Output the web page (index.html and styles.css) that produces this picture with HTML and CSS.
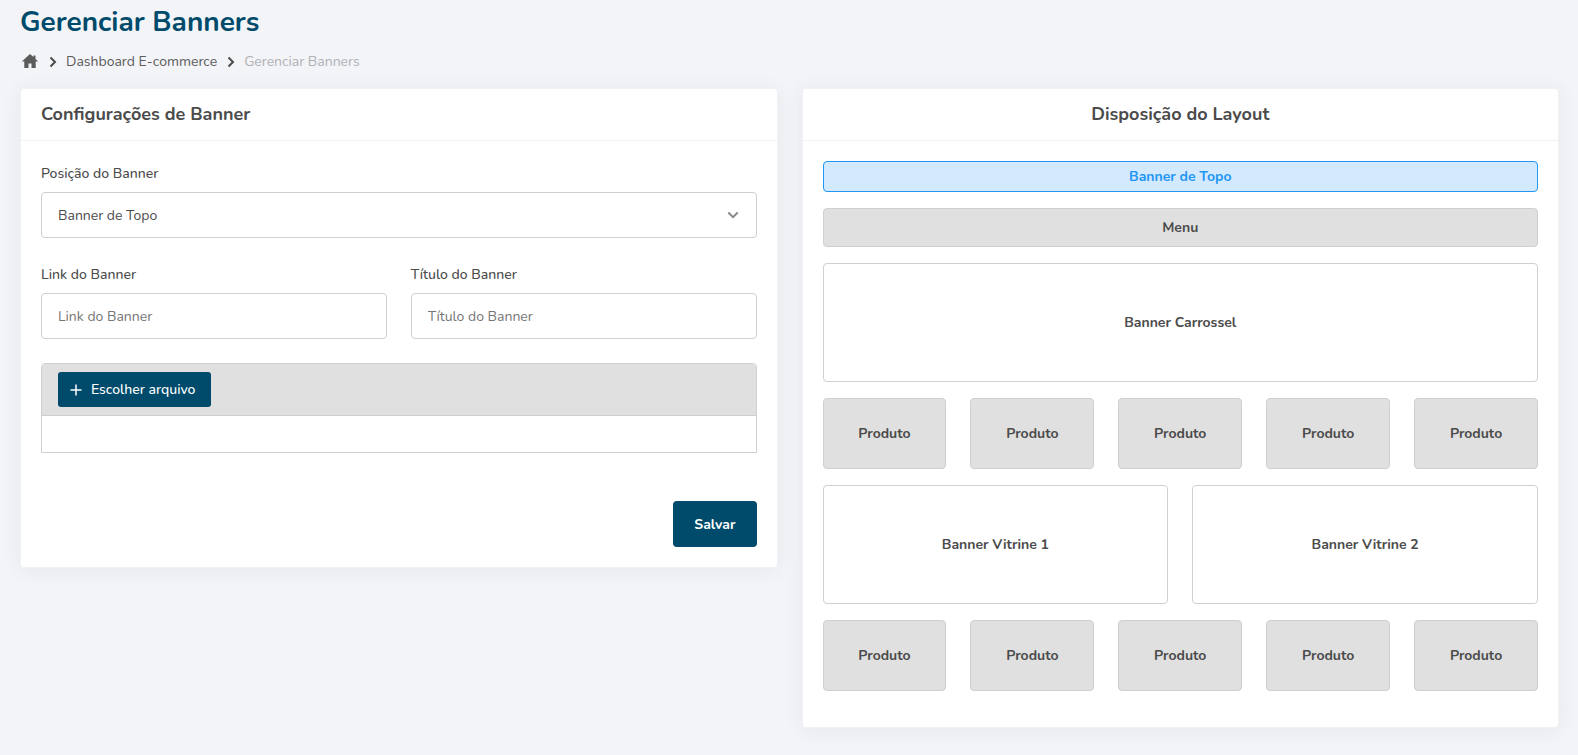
FILE: index.html
```html
<!DOCTYPE html>
<html lang="pt-BR">
<head>
<meta charset="utf-8">
<meta name="viewport" content="width=device-width, initial-scale=1">
<title>Gerenciar Banners</title>
<link rel="stylesheet" href="styles.css">
</head>
<body>
<main class="page">
  <h1 class="page-title">Gerenciar Banners</h1>
  <nav class="breadcrumb" aria-label="Trilha">
    <a class="crumb-home" href="#" aria-label="Início"><svg viewBox="0 0 18 18" width="18" height="18"><path fill="currentColor" d="M9 1 .8 8.500h2.500V15h4.200v-4.500h3V15h4.200V8.500h2.500l-2.700-2.500V2.500h-2v1.600z"/></svg></a>
    <svg class="crumb-sep" viewBox="0 0 8 12" width="8" height="12"><path d="M1.500 1.500 6 6l-4.500 4.500"/></svg>
    <a class="crumb" href="#">Dashboard E-commerce</a>
    <svg class="crumb-sep" viewBox="0 0 8 12" width="8" height="12"><path d="M1.500 1.500 6 6l-4.500 4.500"/></svg>
    <span class="crumb crumb-current" aria-current="page">Gerenciar Banners</span>
  </nav>

  <div class="columns">
    <section class="card">
      <h2 class="card-title">Configurações de Banner</h2>
      <form class="card-body">
        <div class="field">
          <label for="posicao">Posição do Banner</label>
          <div class="select-wrap">
            <select id="posicao" class="control">
              <option>Banner de Topo</option>
              <option>Banner Carrossel</option>
              <option>Banner Vitrine 1</option>
              <option>Banner Vitrine 2</option>
            </select>
            <svg class="select-arrow" viewBox="0 0 12 8" width="12" height="8"><path d="M1.300 1.500 6 6.200l4.700-4.700"/></svg>
          </div>
        </div>
        <div class="field-row">
          <div class="field">
            <label for="link">Link do Banner</label>
            <input id="link" class="control" type="text" placeholder="Link do Banner">
          </div>
          <div class="field">
            <label for="titulo">Título do Banner</label>
            <input id="titulo" class="control" type="text" placeholder="Título do Banner">
          </div>
        </div>
        <div class="upload">
          <div class="upload-bar">
            <button class="btn btn-file" type="button"><svg viewBox="0 0 12 12" width="12" height="12"><path d="M6 .5v11M.5 6h11"/></svg>Escolher arquivo</button>
          </div>
          <div class="upload-content"></div>
        </div>
        <div class="actions"><button class="btn btn-save" type="submit">Salvar</button></div>
      </form>
    </section>

    <section class="card">
      <h2 class="card-title card-title-center">Disposição do Layout</h2>
      <div class="card-body layout">
        <div class="block block-top">Banner de Topo</div>
        <div class="block block-menu">Menu</div>
        <div class="block block-banner">Banner Carrossel</div>
        <div class="block-row">
          <div class="block block-product">Produto</div>
          <div class="block block-product">Produto</div>
          <div class="block block-product">Produto</div>
          <div class="block block-product">Produto</div>
          <div class="block block-product">Produto</div>
        </div>
        <div class="block-row">
          <div class="block block-banner">Banner Vitrine 1</div>
          <div class="block block-banner">Banner Vitrine 2</div>
        </div>
        <div class="block-row">
          <div class="block block-product">Produto</div>
          <div class="block block-product">Produto</div>
          <div class="block block-product">Produto</div>
          <div class="block block-product">Produto</div>
          <div class="block block-product">Produto</div>
        </div>
      </div>
    </section>
  </div>
</main>
</body>
</html>
```
FILE: styles.css
```css
* { box-sizing: border-box; }

body {
  margin: 0;
  background: #f3f4f8;
  color: #4b4b4b;
  font: 14px/20px Nunito, Lato, "Open Sans", sans-serif;
}

.page { padding: 4px 19px 24px 20px; }

.page-title {
  margin: 0 0 13px;
  color: #004b6b;
  font-size: 28px;
  line-height: 36px;
  font-weight: 700;
}

.breadcrumb {
  display: flex;
  align-items: center;
  height: 18px;
  margin-bottom: 17px;
  padding-left: 1px;
}

.crumb, .crumb-home { color: #5b5b5b; text-decoration: none; }
.crumb-home { display: flex; }
.crumb-current { color: #b0b1b4; }

.crumb-sep { margin: 0 9px 0 10px; }
.crumb-sep path, .select-arrow path, .btn-file path {
  fill: none;
  stroke: #4b4b4b;
  stroke-width: 2;
}

.columns {
  display: grid;
  grid-template-columns: repeat(2, minmax(0, 1fr));
  align-items: start;
  gap: 24px;
}

.card {
  background: #fff;
  border: 1px solid #f1f2f4;
  border-radius: 4px;
  box-shadow: 0 2px 20px rgba(60, 70, 90, .07);
}

.card-title {
  margin: 0;
  padding: 12px 20px 13px;
  border-bottom: 1px solid #f1f1f1;
  font-size: 18px;
  line-height: 26px;
  font-weight: 700;
}
.card-title-center { text-align: center; }

.card-body { padding: 20px; }

.field label {
  display: block;
  margin-bottom: 8px;
  padding-top: 3px;
  font-weight: 500;
}

.control {
  display: block;
  width: 100%;
  height: 46px;
  padding: 0 16px;
  border: 1px solid #cfcfcf;
  border-radius: 4px;
  background: #fff;
  color: #4b4b4b;
  font: inherit;
  appearance: none;
}
.control::placeholder { color: #757575; opacity: 1; }

.select-wrap { position: relative; }
.select-wrap .control { padding-top: 1px; }
.select-arrow {
  position: absolute;
  right: 18px;
  top: 19px;
  pointer-events: none;
}
.select-arrow path { stroke: #8a8a8a; }

.field-row {
  display: grid;
  grid-template-columns: repeat(2, minmax(0, 1fr));
  gap: 24px;
  margin: 24px 0;
}

.upload {
  border: 1px solid #cfcfcf;
  border-radius: 4px 4px 0 0;
}
.upload-bar {
  padding: 8px 16px;
  border-bottom: 1px solid #cfcfcf;
  background: #e0e0e0;
}
.upload-content { height: 36px; }

.btn {
  border: 0;
  background: #004b6b;
  color: #fff;
  font: inherit;
}
.btn-file {
  display: flex;
  align-items: center;
  gap: 9px;
  height: 35px;
  padding: 0 16px 0 12px;
  border-radius: 3px;
  font-weight: 500;
}
.btn-file path { stroke: #fff; stroke-width: 1.5; }

.actions {
  display: flex;
  justify-content: flex-end;
  margin-top: 48px;
}
.btn-save {
  height: 46px;
  padding: 1px 21px 0;
  border-radius: 4px;
  font-weight: 700;
}

.layout {
  display: flex;
  flex-direction: column;
  gap: 16px;
  padding-bottom: 36px;
}

.block-row { display: flex; gap: 24px; }
.block-row .block { flex: 1; }

.block {
  display: flex;
  align-items: center;
  justify-content: center;
  border: 1px solid #cfcfcf;
  border-radius: 4px;
  font-weight: 700;
}
.block-top {
  height: 31px;
  border-color: #2196f3;
  background: #d3e9fd;
  color: #2196f3;
}
.block-menu, .block-product { background: #e0e0e0; }
.block-menu { height: 39px; }
.block-product { height: 71px; }
.block-banner { height: 119px; }
```
